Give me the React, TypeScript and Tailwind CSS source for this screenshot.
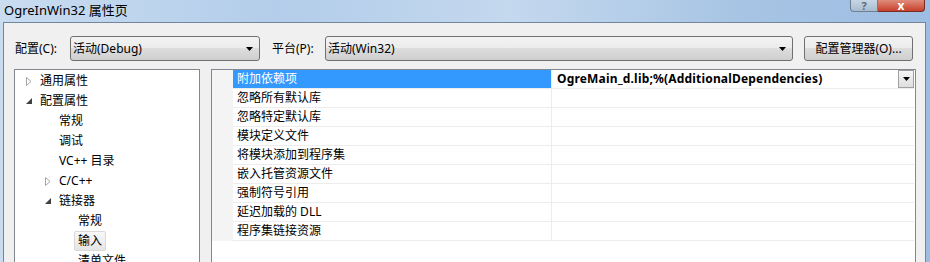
import React from "react";

const FONT = { fontFamily: '"Noto Sans", "Noto Sans CJK SC", sans-serif' };

function Arrow({ w = 7 }: { w?: number }) {
  return (
    <svg width={w} height={4} viewBox="0 0 7 4">
      <path d="M0 0 H7 L3.5 4 Z" fill="#000" />
    </svg>
  );
}

function Combo({ text, width }: { text: string; width: string }) {
  return (
    <div
      className={`${width} h-[25px] flex items-center justify-between rounded-[3px] border border-[#707070] pl-[2px] pr-[6px] text-[12px] text-black bg-[linear-gradient(#f3f3f3_0%,#ebebeb_50%,#dddddd_50%,#cfcfcf_100%)]`}
    >
      <span>{text}</span>
      <Arrow />
    </div>
  );
}

function Collapsed() {
  return (
    <svg width="6" height="9" viewBox="0 0 6 9">
      <path d="M0.5 0.5 L5 4.5 L0.5 8.5 Z" fill="none" stroke="#a5a5a5" />
    </svg>
  );
}

function Expanded() {
  return (
    <svg width="6" height="6" viewBox="0 0 6 6">
      <path d="M6 0 V6 H0 Z" fill="#404040" />
    </svg>
  );
}

type TreeItem = { label: string; level: number; state?: "c" | "e"; selected?: boolean };

const tree: TreeItem[] = [
  { label: "通用属性", level: 0, state: "c" },
  { label: "配置属性", level: 0, state: "e" },
  { label: "常规", level: 1 },
  { label: "调试", level: 1 },
  { label: "VC++ 目录", level: 1 },
  { label: "C/C++", level: 1, state: "c" },
  { label: "链接器", level: 1, state: "e" },
  { label: "常规", level: 2 },
  { label: "输入", level: 2, selected: true },
  { label: "清单文件", level: 2 },
];

const props = [
  "附加依赖项",
  "忽略所有默认库",
  "忽略特定默认库",
  "模块定义文件",
  "将模块添加到程序集",
  "嵌入托管资源文件",
  "强制符号引用",
  "延迟加载的 DLL",
  "程序集链接资源",
];

export default function App() {
  return (
    <div
      className="w-[930px] h-[262px] overflow-hidden flex flex-col bg-[linear-gradient(90deg,#c9dcf0_0%,#b3cdea_30%,#c4d8ee_55%,#a7c4e4_80%,#9dbde2_100%)]"
      style={FONT}
    >
      {/* title bar */}
      <div className="h-[22px] shrink-0 flex items-start justify-between">
        <div className="pl-[4px] pt-[2px] text-[13px] leading-[17px] text-black">OgreInWin32 属性页</div>
        <div className="flex mr-[5px] h-[12px]">
          <div className="w-[28px] h-[12px] rounded-bl-[4px] border border-t-0 border-[#6f7f91] bg-[linear-gradient(#c7d6e6,#a9bccf)] flex items-end justify-center text-[11px] leading-[10px] text-[#5b6b7c] font-bold">
            ?
          </div>
          <div className="w-[47px] h-[12px] rounded-br-[4px] border border-t-0 border-l-0 border-[#7a2b22] bg-[linear-gradient(#e08d7c,#c7402b)] flex items-end justify-center text-[12px] leading-[10px] text-white font-bold">
            x
          </div>
        </div>
      </div>

      {/* body */}
      <div className="flex-1 ml-[3px] mr-[4px] border-l border-t border-r border-[#74869b] bg-[#f0f0f0] flex flex-col">
        {/* top row */}
        <div className="flex items-center pt-[13px] pl-[11px] text-[12px] text-black">
          <div className="w-[55px]">配置(C):</div>
          <Combo text="活动(Debug)" width="w-[190px]" />
          <div className="w-[53px] ml-[12px]">平台(P):</div>
          <Combo text="活动(Win32)" width="w-[468px]" />
          <div className="ml-[11px] w-[109px] h-[25px] flex items-center justify-center rounded-[3px] border border-[#707070] bg-[linear-gradient(#f3f3f3_0%,#ebebeb_50%,#dddddd_50%,#cfcfcf_100%)]">
            配置管理器(O)...
          </div>
        </div>

        {/* panels */}
        <div className="flex mt-[8px] pl-[10px] flex-1">
          {/* tree */}
          <div className="w-[186px] h-[260px] shrink-0 bg-white border border-[#828790] pt-[1px] text-[12px] text-black">
            {tree.map((t, i) => (
              <div key={i} className="h-[20px] flex items-center" style={{ paddingLeft: 11 + t.level * 19 }}>
                <div className="w-[14px] flex items-center">
                  {t.state === "c" && <Collapsed />}
                  {t.state === "e" && <Expanded />}
                </div>
                {t.selected ? (
                  <div className="-ml-[4px] h-[20px] px-[3px] flex items-center rounded-[2px] border border-[#d9d9d9] bg-[linear-gradient(#f8f8f8,#e5e5e5)]">
                    {t.label}
                  </div>
                ) : (
                  <div className="whitespace-pre">{t.label}</div>
                )}
              </div>
            ))}
          </div>

          {/* property grid */}
          <div className="ml-[11px] w-[705px] h-[260px] shrink-0 bg-white border border-[#828790] text-[12px] text-black">
            <div className="flex">
              <div className="w-[21px] h-[171px] bg-[#f4f4f4] shrink-0" />
              <div className="w-[681px]">
                {props.map((p, i) => (
                  <div key={i} className="h-[19px] flex border-b border-[#ececec]">
                    <div
                      className={`w-[319px] shrink-0 pl-[4px] flex items-center border-r border-[#ececec] ${
                        i === 0 ? "bg-[#3399ff] text-white" : ""
                      }`}
                    >
                      {p}
                    </div>
                    <div className="flex-1 flex items-center justify-between pl-[5px]">
                      {i === 0 && (
                        <>
                          <span className="font-bold tracking-[0.18px]">OgreMain_d.lib;%(AdditionalDependencies)</span>
                          <div className="w-[16px] h-[18px] border border-[#a0a0a0] bg-[linear-gradient(#f6f6f6,#dedede)] flex items-center justify-center">
                            <svg width="7" height="4" viewBox="0 0 7 4">
                              <path d="M0 0 H7 L3.5 4 Z" fill="#000" />
                            </svg>
                          </div>
                        </>
                      )}
                    </div>
                  </div>
                ))}
              </div>
            </div>
          </div>
        </div>
      </div>
    </div>
  );
}
